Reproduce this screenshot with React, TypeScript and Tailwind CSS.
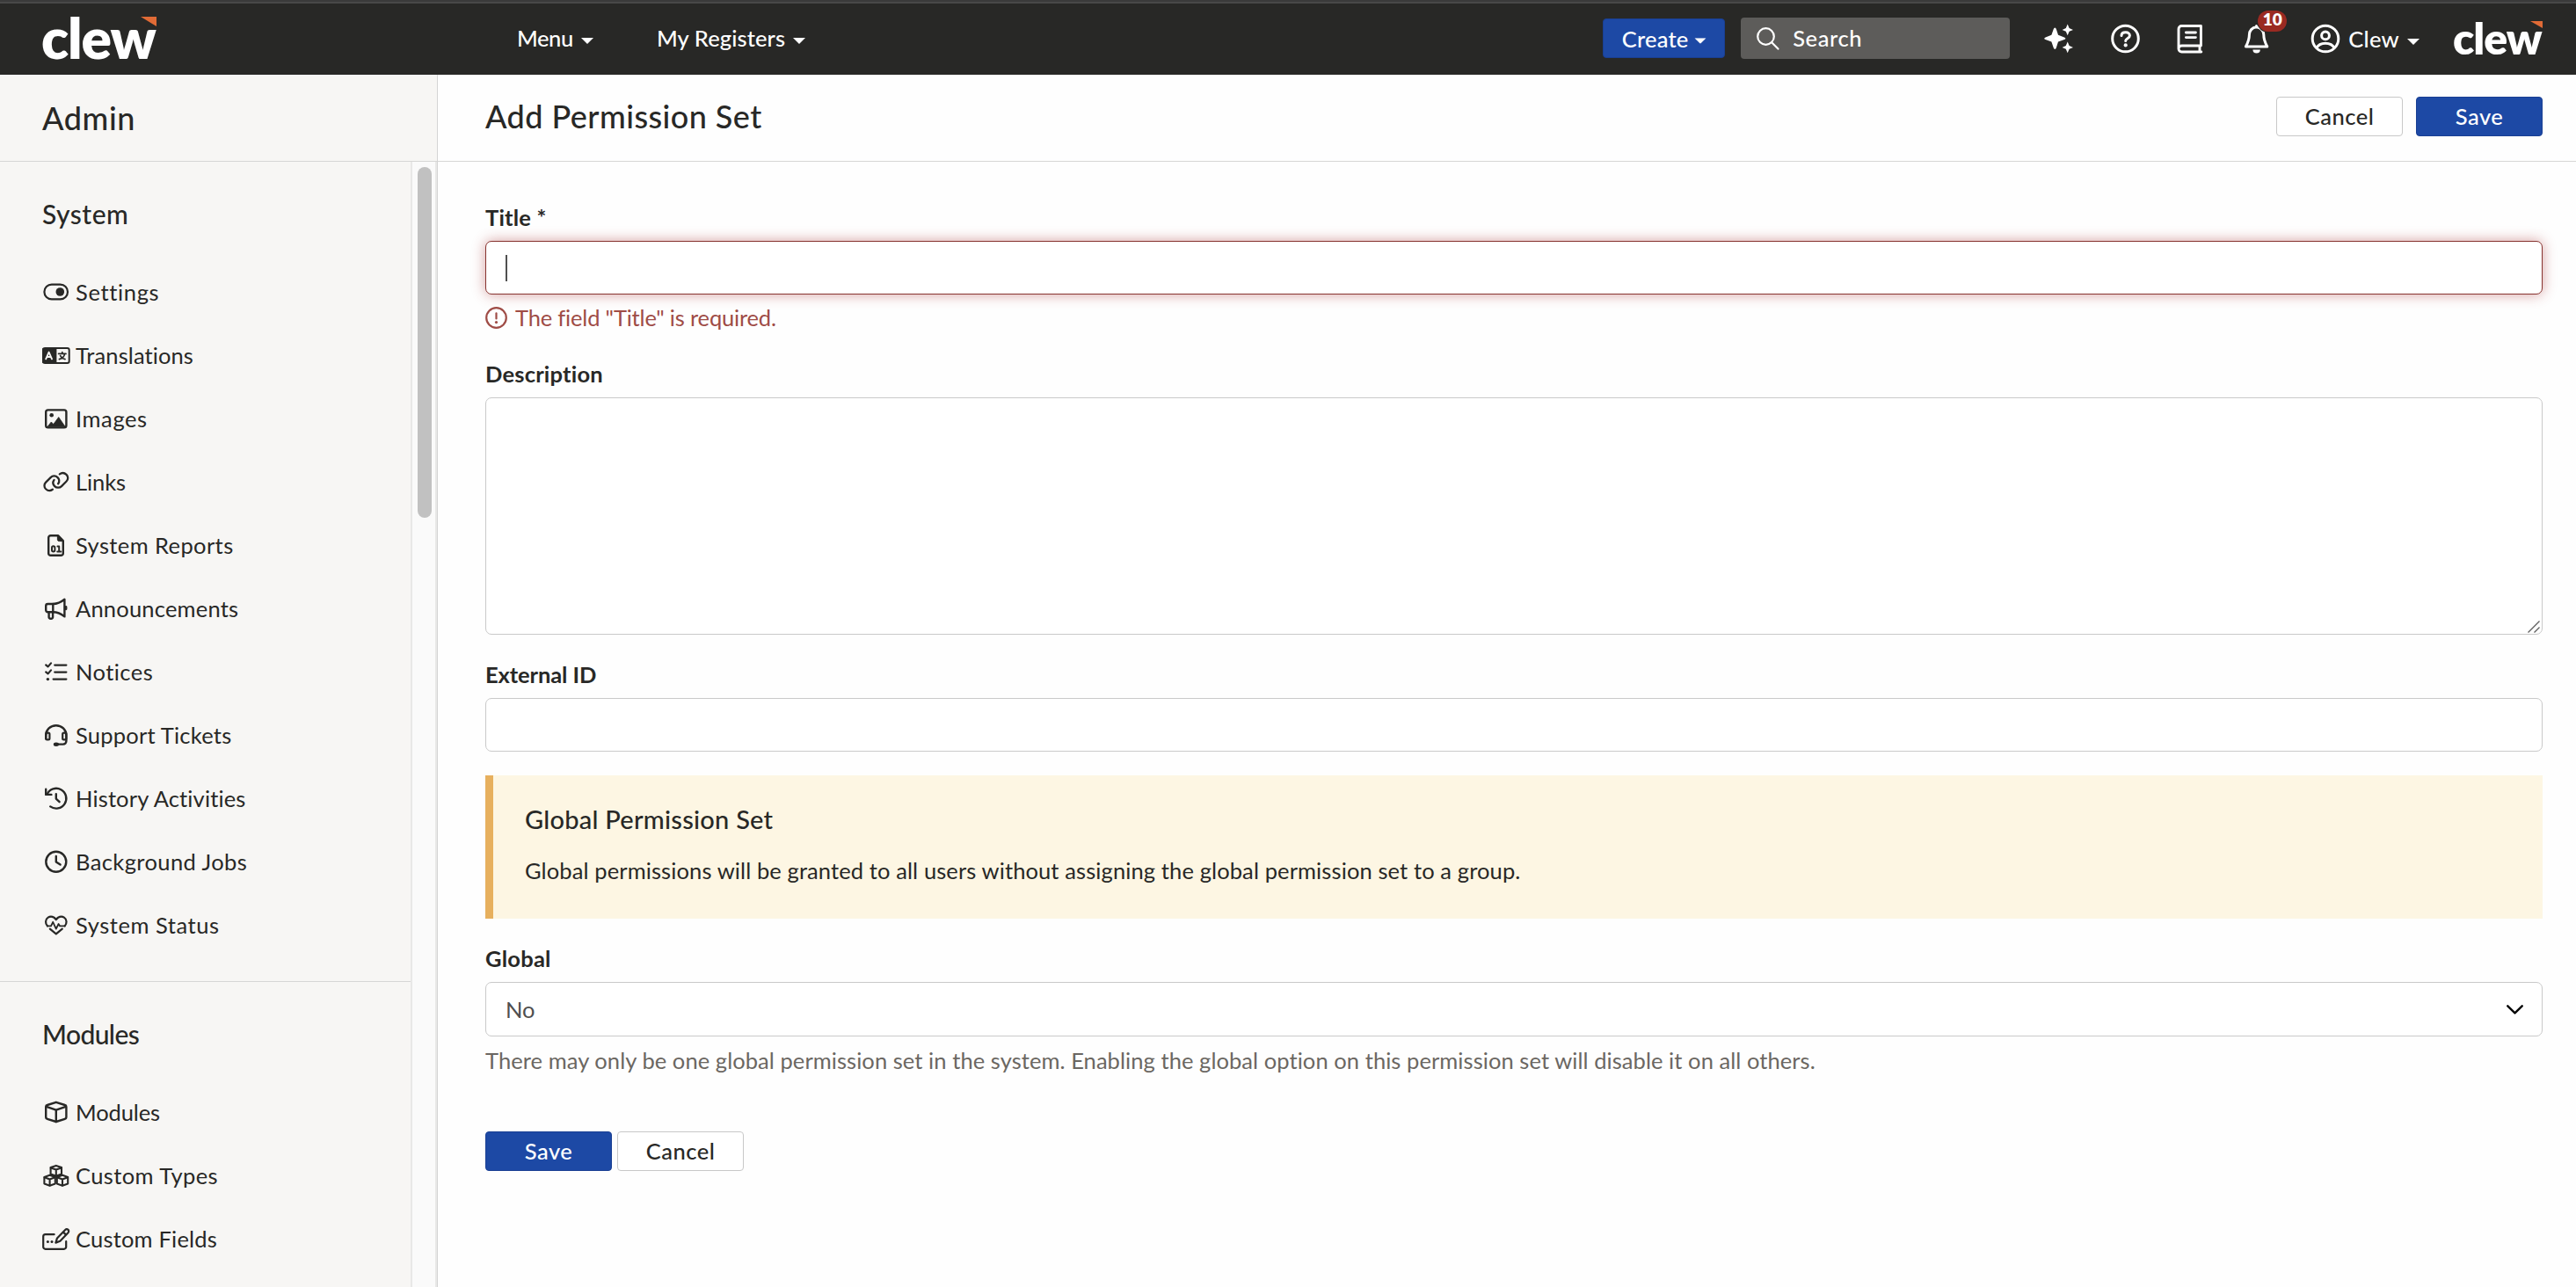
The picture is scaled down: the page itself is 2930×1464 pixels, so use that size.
import React, { useState } from "react";

type iconProps = { children: React.ReactNode; sw?: number };

type menuItem = {
  label: string;
  icon: React.ReactNode;
  tracking: string;
};

type section = {
  title: string;
  tracking: string;
  items: menuItem[];
};

const Icon = ({ children, sw = 2.4 }: iconProps) => (
  <svg
    className="h-[26px] w-8 shrink-0"
    viewBox="0 0 32 26"
    fill="none"
    stroke="currentColor"
    strokeWidth={sw}
    strokeLinecap="round"
    strokeLinejoin="round"
    overflow="visible"
  >
    {children}
  </svg>
);

const Caret = ({ className = "" }: { className?: string }) => (
  <svg className={`h-[7px] w-[14px] shrink-0 ${className}`} viewBox="0 0 14 7" fill="currentColor">
    <path d="M0 0h14L7 7z" />
  </svg>
);

const SmallCube = ({ x, y }: { x: number; y: number }) => (
  <g transform={`translate(${x} ${y})`}>
    <path d="M0 -5.9L6.2 -3.8V3.8L0 6L-6.2 3.8V-3.8z" />
    <path d="M-6 -3.4L0 -1.2L6 -3.4M0 -1.2V5.8" />
  </g>
);

const sections: section[] = [
  {
    title: "System",
    tracking: "tracking-[0.5px]",
    items: [
      {
        label: "Settings",
        tracking: "tracking-[0.65px]",
        icon: (
          <Icon sw={2.2}>
            <rect x="2.4" y="4.6" width="26.6" height="16.8" rx="8.4" />
            <circle cx="20.3" cy="13" r="4.8" fill="currentColor" stroke="none" />
          </Icon>
        ),
      },
      {
        label: "Translations",
        tracking: "tracking-[0.1px]",
        icon: (
          <Icon sw={2}>
            <rect x="1" y="5" width="29.7" height="17" rx="2.2" />
            <path d="M1 6h14.4v15H1z" fill="currentColor" />
            <path d="M4.2 17.3L7.6 9.6L11 17.3M5.5 15h4.2" stroke="#f7f6f4" strokeWidth="1.9" />
            <path d="M18.6 11.4h8.4M22.8 9.6v1.8M25.6 11.6C25 14.6 22.6 16.8 19.4 17.6M20.6 13.6C21.6 15.6 23.4 17 26 17.6" strokeWidth="1.7" />
          </Icon>
        ),
      },
      {
        label: "Images",
        tracking: "tracking-[0.6px]",
        icon: (
          <Icon>
            <rect x="4.2" y="3.4" width="23.2" height="20" rx="2.4" />
            <circle cx="10.7" cy="9.3" r="2.3" fill="currentColor" stroke="none" />
            <path d="M6 22.5L10.3 17L12.8 19.6L18.7 11.6L26.2 22.5z" fill="currentColor" strokeWidth="0.8" />
          </Icon>
        ),
      },
      {
        label: "Links",
        tracking: "tracking-[-0.1px]",
        icon: (
          <Icon>
            <g transform="translate(0 .4) scale(.0495)" strokeWidth="46">
              <path d="M400 80c49-36 114-30 157 10c44 44 44 112 0 155L445 357c-44 44-115 44-159 0c-39-39-44-100-12-145" />
              <path
                transform="rotate(180 320 256)"
                d="M400 80c49-36 114-30 157 10c44 44 44 112 0 155L445 357c-44 44-115 44-159 0c-39-39-44-100-12-145"
              />
            </g>
          </Icon>
        ),
      },
      {
        label: "System Reports",
        tracking: "tracking-[0.4px]",
        icon: (
          <Icon>
            <path d="M9.6 2.2H18L23.8 8V22.4A2.4 2.4 0 0 1 21.4 24.8H9.6A2.4 2.4 0 0 1 7.2 22.4V4.6A2.4 2.4 0 0 1 9.6 2.2z" />
            <path d="M17.4 2V6.6A2 2 0 0 0 19.4 8.6H24z" fill="currentColor" strokeWidth="1" />
            <rect x="11" y="14.2" width="3.4" height="6.2" rx="1.7" strokeWidth="2" />
            <path d="M17.4 14.4h1.8v6M17.2 20.5h4" strokeWidth="2" />
          </Icon>
        ),
      },
      {
        label: "Announcements",
        tracking: "tracking-[0.2px]",
        icon: (
          <Icon>
            <path d="M12.3 8H6.4A2.2 2.2 0 0 0 4.2 10.2V15A2.2 2.2 0 0 0 6.4 17.2H12.3z" />
            <path d="M12.3 8C17.5 8 21.5 6 25.4 2.8V22.4C21.5 19.2 17.5 17.2 12.3 17.2" />
            <path d="M7.6 17.4V23A1.8 1.8 0 0 0 9.4 24.8H10.3A1.8 1.8 0 0 0 12.1 23V17.4" />
            <path d="M27 11.4V13.8" strokeWidth="2.8" />
          </Icon>
        ),
      },
      {
        label: "Notices",
        tracking: "tracking-[0.45px]",
        icon: (
          <Icon sw={2.2}>
            <path d="M14.2 5.6H27.4M14.2 13.6H27.4M12.6 21.6H27.4" />
            <path d="M4.2 5.4L6.6 7.4L10 3.4M4.2 13.4L6.6 15.4L10 11.4" />
            <circle cx="6.4" cy="21.6" r="1.7" fill="currentColor" stroke="none" />
          </Icon>
        ),
      },
      {
        label: "Support Tickets",
        tracking: "tracking-[0.22px]",
        icon: (
          <Icon>
            <path d="M4.2 17V13.4A11.6 11.2 0 0 1 27.4 13.4V20A3.6 3.6 0 0 1 23.8 23.6H17" />
            <rect x="4.2" y="10.6" width="4.2" height="7.8" rx="1.4" strokeWidth="2.2" />
            <rect x="23.2" y="10.6" width="4.2" height="7.8" rx="1.4" strokeWidth="2.2" />
            <ellipse cx="15.9" cy="23.8" rx="3.1" ry="2.2" fill="currentColor" stroke="none" />
          </Icon>
        ),
      },
      {
        label: "History Activities",
        tracking: "tracking-[0.15px]",
        icon: (
          <Icon>
            <path d="M5.6 8.4A11.4 11.4 0 1 1 9.2 22.4" />
            <path d="M4.2 2.8V8.9H10.4" />
            <path d="M15.8 8.2V13.6L19.6 17.2" />
          </Icon>
        ),
      },
      {
        label: "Background Jobs",
        tracking: "tracking-[0.4px]",
        icon: (
          <Icon>
            <circle cx="15.8" cy="13.2" r="11.5" />
            <path d="M15.8 7V13.4L20.6 16.6" />
          </Icon>
        ),
      },
      {
        label: "System Status",
        tracking: "tracking-[0.55px]",
        icon: (
          <Icon sw={2.2}>
            <path d="M6 14.4C3.2 11.6 3.4 6.8 6.7 4.6C10 2.6 13.6 4 15.8 7C18 4 21.6 2.6 24.9 4.6C28.2 6.8 28.4 11.6 25.6 14.4" />
            <path d="M6 14.4H10L12.2 9.8L15.8 17.6L18.6 12L20.2 14.4H25.6" strokeWidth="1.8" />
            <path d="M8.8 17.6L15.8 23.4L22.8 17.6" />
          </Icon>
        ),
      },
    ],
  },
  {
    title: "Modules",
    tracking: "tracking-[-0.6px]",
    items: [
      {
        label: "Modules",
        tracking: "tracking-[-0.1px]",
        icon: (
          <Icon>
            <path d="M15.8 1.8L25.8 5A2 2 0 0 1 27.4 7V18.8A2 2 0 0 1 25.8 20.8L15.8 24L5.8 20.8A2 2 0 0 1 4.2 18.8V7A2 2 0 0 1 5.8 5z" />
            <path d="M4.8 6.8L15.8 10.6L26.8 6.8M15.8 10.6V24" />
          </Icon>
        ),
      },
      {
        label: "Custom Types",
        tracking: "tracking-[0.4px]",
        icon: (
          <Icon sw={2.1}>
            <SmallCube x={15.8} y={7.8} />
            <SmallCube x={8.6} y={18.7} />
            <SmallCube x={23} y={18.7} />
          </Icon>
        ),
      },
      {
        label: "Custom Fields",
        tracking: "tracking-[0.2px]",
        icon: (
          <Icon sw={2.2}>
            <path d="M13.6 8.2H3.6A2.4 2.4 0 0 0 1.2 10.6V22.4A2.4 2.4 0 0 0 3.6 24.8H24.8A2.4 2.4 0 0 0 27.2 22.4V16.2" />
            <path d="M15.4 17.6L17 12.4L26.2 2.9A2.3 2.3 0 0 1 29.5 6.2L20.4 15.8zM23.8 5.4L27 8.6" />
            <circle cx="6.4" cy="16.4" r="1.5" fill="currentColor" stroke="none" />
            <circle cx="11" cy="16.4" r="1.5" fill="currentColor" stroke="none" />
          </Icon>
        ),
      },
    ],
  },
];

const button = "flex h-[45px] w-36 items-center justify-center rounded-[4px] border font-medium tracking-[0.5px]";
const primary = "border-[#193f93] bg-[#1d49a5] text-white";
const secondary = "border-[#c8c8c8] bg-white text-[#282826]";
const field = "block w-full rounded-[7px] border border-[#c9c9c9] bg-white outline-none";
const label = "mb-[9px] block pt-px leading-9 font-bold";

function Header() {
  return (
    <header className="flex h-[85px] shrink-0 items-center border-t-2 border-[#3a3a3a] bg-[#282826] pr-[38px] pl-12 text-white shadow-[inset_0_2px_0_#484848]">
      <div className="relative -mt-[2px] w-[540px] text-[64px] leading-none font-extrabold">
        <span className="-ml-px tracking-[-1.1px]">clew</span>
        <svg className="absolute top-[8px] left-[112px] h-[11px] w-[18px]" viewBox="0 0 18 11">
          <path d="M0 0h18v11z" fill="#e16b36" />
        </svg>
      </div>
      <nav className="-mt-px flex flex-1 items-center font-medium">
        <button className="flex w-[159px] items-center gap-[9px] tracking-[-0.4px]">
          Menu <Caret className="mt-[6px]" />
        </button>
        <button className="flex items-center gap-[9px] tracking-[0.1px]">
          My Registers <Caret className="mt-[6px]" />
        </button>
      </nav>
      <button className="flex h-[45px] w-[139px] items-center justify-center gap-[6px] rounded-[4px] border border-[#193f93] bg-[#1d49a5] pt-px font-medium tracking-[0.2px]">
        Create <Caret className="mt-[5px] scale-95" />
      </button>
      <div className="ml-[18px] flex h-[47px] w-[306px] items-center rounded-[4px] bg-[#5d5c5a] pl-[18px] font-medium tracking-[0.6px]">
        <svg className="mr-[15px] h-[26px] w-[26px]" viewBox="0 0 26 26" fill="none" stroke="currentColor" strokeWidth="2.2" strokeLinecap="round">
          <circle cx="10.5" cy="10.5" r="9.3" />
          <path d="M17.2 17.2L24.4 24.6" />
        </svg>
        <span>Search</span>
      </div>
      <div className="ml-[39px] flex items-center">
        {/* AI sparkles */}
        <svg className="h-[34px] w-[34px]" viewBox="0 0 34 34" fill="currentColor">
          <path d="M12.3 4.5Q13.3 4.5 13.8 6L16 12.8L23 15.4Q24.4 16 24.4 16.7T23 18L16 20.6L13.8 27.6Q13.3 29 12.3 29T10.8 27.6L8.4 20.6L1.6 18Q.2 17.4 .2 16.7T1.6 15.4L8.4 12.8L10.8 6Q11.3 4.5 12.3 4.5z" />
          <path d="M26.7 .6L28.6 5.1L33 6.9L28.6 8.7L26.7 13.2L24.8 8.7L20.6 6.9L24.8 5.1z" />
          <path d="M26.7 20.6L28.6 25.1L33 26.9L28.6 28.7L26.7 33.2L24.8 28.7L20.6 26.9L24.8 25.1z" />
        </svg>
        <svg className="ml-[42px] h-[34px] w-[34px]" viewBox="0 0 34 34" fill="none" stroke="currentColor" strokeWidth="3" strokeLinecap="round">
          <circle cx="16.5" cy="17" r="14.8" />
          <path d="M12 13.6C12 11 14 9.8 16.8 9.8C19.6 9.8 21.4 11.4 21.4 13.6C21.4 16.8 16.7 16.8 16.7 19.6" />
          <circle cx="16.7" cy="24.4" r="2.1" fill="currentColor" stroke="none" />
        </svg>
        <svg className="ml-[41px] h-[34px] w-[30px]" viewBox="0 0 30 34" fill="none" stroke="currentColor" strokeWidth="2.9" strokeLinecap="round" strokeLinejoin="round">
          <path d="M27.4 25V2.5H5.4A3.4 3.4 0 0 0 2 5.9V28.6A3.6 3.6 0 0 1 5.6 25H27.4M2 28.6A3.4 3.4 0 0 0 5.4 32H27.8M26 25.4V32" />
          <path d="M10.4 10H21.4M10.4 15.6H21.4" />
        </svg>
        <div className="relative ml-[46px] h-[34px] w-[30px]">
          <svg className="h-[34px] w-[30px]" viewBox="0 0 30 34" fill="none" stroke="currentColor" strokeWidth="3" strokeLinecap="round" strokeLinejoin="round">
            <path d="M14.5 3.8C9.6 4.2 6.4 8 6.4 12.6C6.4 19 4.6 22 2.4 26H26.8C24.6 22 22.8 19 22.8 12.6C22.8 8 19.4 4.2 14.5 3.8zM14.5 3.2V2.6" />
            <path d="M10.4 29.6H18.8A4.2 4 0 0 1 10.4 29.6z" fill="currentColor" stroke="none" />
          </svg>
          <span className="absolute -top-[15px] left-4 flex h-6 w-[33px] items-center justify-center rounded-full bg-[#9a2a22] pb-[2px] text-[19px] font-extrabold shadow-[0_0_0_1px_#282826]">
            10
          </span>
        </div>
        <svg className="ml-[46px] h-[34px] w-[34px]" viewBox="0 0 34 34" fill="none" stroke="currentColor" strokeWidth="3">
          <circle cx="17" cy="17" r="14.8" />
          <circle cx="17" cy="13.4" r="4.4" />
          <path d="M7 27.6C8.8 23.8 12 22.2 17 22.2S25.2 23.8 27 27.6" />
        </svg>
        <span className="ml-[9px] pt-px font-medium tracking-[0.3px]">Clew</span>
        <Caret className="mt-[7px] ml-[9px]" />
      </div>
      <div className="relative ml-[39px] -mt-[2px] w-[101px] text-[50px] leading-none font-extrabold">
        <span className="-ml-px tracking-[-1px]">clew</span>
        <svg className="absolute top-[6px] right-0 h-2 w-[14px]" viewBox="0 0 14 8">
          <path d="M0 0h14v8z" fill="#e16b36" />
        </svg>
      </div>
    </header>
  );
}

function Sidebar() {
  return (
    <aside className="flex w-[498px] shrink-0 flex-col border-r border-[#d4d4d4] bg-[#f7f6f4]">
      <div className="flex h-[99px] shrink-0 items-center border-b border-[#d6d6d5] pl-12 text-[36px] font-medium tracking-[0.6px]">
        Admin
      </div>
      <div className="flex min-h-0 flex-1">
        <div className="w-[467px] overflow-hidden">
          {sections.map((group) => (
            <div key={group.title} className="border-b border-[#d6d6d5] pb-7">
              <h2 className={`flex h-28 items-center pt-[6px] pl-12 text-[30px] font-medium ${group.tracking}`}>
                {group.title}
              </h2>
              {group.items.map((item) => (
                <a key={item.label} className="flex h-[72px] items-center gap-[6px] pl-12">
                  {item.icon}
                  <span className={`pt-px ${item.tracking}`}>{item.label}</span>
                </a>
              ))}
            </div>
          ))}
        </div>
        {/* scrollbar */}
        <div className="w-[30px] border-x-2 border-[#e8e8e7] bg-[#fafafa] pt-[6px] pl-[6px]">
          <div className="h-[399px] w-4 rounded-full bg-[#c1c1c1]" />
        </div>
      </div>
    </aside>
  );
}

export default function App() {
  const [title, setTitle] = useState("");
  const [description, setDescription] = useState("");
  const [externalId, setExternalId] = useState("");

  return (
    <div className="flex h-screen w-screen flex-col overflow-hidden bg-[#fefefe] font-['Lato',sans-serif] text-[25.5px] text-[#282826]">
      <Header />
      <div className="flex min-h-0 flex-1">
        <Sidebar />

        <main className="flex-1">
          <div className="flex h-[99px] items-center justify-between border-b border-[#d6d6d5] pr-[38px] pb-[3px] pl-[54px]">
            <h1 className="pb-[2px] text-[36px] font-medium tracking-[0.45px]">Add Permission Set</h1>
            <div className="flex gap-[15px]">
              <button className={`${button} ${secondary}`}>Cancel</button>
              <button className={`${button} ${primary}`}>Save</button>
            </div>
          </div>

          <div className="pt-11 pr-[38px] pl-[54px]">
            <label className={`${label} tracking-[0.2px]`}>Title *</label>
            <div className="relative">
              <input
                type="text"
                className="block h-[61px] w-full rounded-[7px] border border-[#87332f] bg-white px-[22px] shadow-[0_0_15px_rgba(165,45,45,0.45)] outline-none"
                value={title}
                onChange={(e) => setTitle(e.target.value)}
              />
              <span className="absolute top-4 left-[23px] h-[30px] w-[2px] bg-[#505050]" />
            </div>
            <div className="mt-2 mb-[27px] flex h-9 items-center gap-[9px] text-[#9f4c46]">
              <svg className="h-[25px] w-[25px]" viewBox="0 0 25 25" fill="none" stroke="currentColor" strokeWidth="2.2" strokeLinecap="round">
                <circle cx="12.5" cy="12.5" r="11.3" />
                <path d="M12.5 7.4V13.4" />
                <circle cx="12.5" cy="17.6" r="1.6" fill="currentColor" stroke="none" />
              </svg>
              <span className="pt-px tracking-[-0.18px]">The field "Title" is required.</span>
            </div>

            <label className={`${label} tracking-[0.2px]`}>Description</label>
            <div className="relative mb-[26px]">
              <textarea
                className={`${field} h-[270px] resize-none px-[22px]`}
                value={description}
                onChange={(e) => setDescription(e.target.value)}
              />
              <svg className="absolute right-[3px] bottom-[2px] h-[14px] w-[14px]" viewBox="0 0 14 14" stroke="#5f5f5f" strokeWidth="1.4">
                <path d="M.5 13.5L13.5 .5M7.5 13.5L13.5 7.5" />
              </svg>
            </div>

            <label className={`${label} tracking-[-0.1px]`}>External ID</label>
            <input
              type="text"
              className={`${field} h-[61px] px-[22px]`}
              value={externalId}
              onChange={(e) => setExternalId(e.target.value)}
            />

            <div className="mt-[27px] mb-[26px] h-[163px] border-l-[9px] border-[#e7b05e] bg-[#fdf6e3] pt-[30px] pl-9">
              <h3 className="text-[29px] leading-10 font-medium tracking-[0.25px]">Global Permission Set</h3>
              <p className="mt-5 leading-9 tracking-[0.11px]">
                Global permissions will be granted to all users without assigning the global permission set to a group.
              </p>
            </div>

            <label className={`${label} tracking-[0.25px]`}>Global</label>
            <div className={`${field} flex h-[62px] items-center justify-between pr-[21px] pl-[22px] text-[#4f4f4f]`}>
              No
              <svg className="h-[11px] w-[19px]" viewBox="0 0 19 11" fill="none" stroke="#000" strokeWidth="2.4" strokeLinecap="round" strokeLinejoin="round">
                <path d="M1.3 1.3L9.5 9.4L17.7 1.3" />
              </svg>
            </div>
            <p className="mt-[9px] mb-[63px] leading-9 tracking-[0.065px] text-[#6b6762]">
              There may only be one global permission set in the system. Enabling the global option on this permission
              set will disable it on all others.
            </p>

            <div className="flex gap-[6px]">
              <button className={`${button} ${primary}`}>Save</button>
              <button className={`${button} ${secondary}`}>Cancel</button>
            </div>
          </div>
        </main>
      </div>
    </div>
  );
}
